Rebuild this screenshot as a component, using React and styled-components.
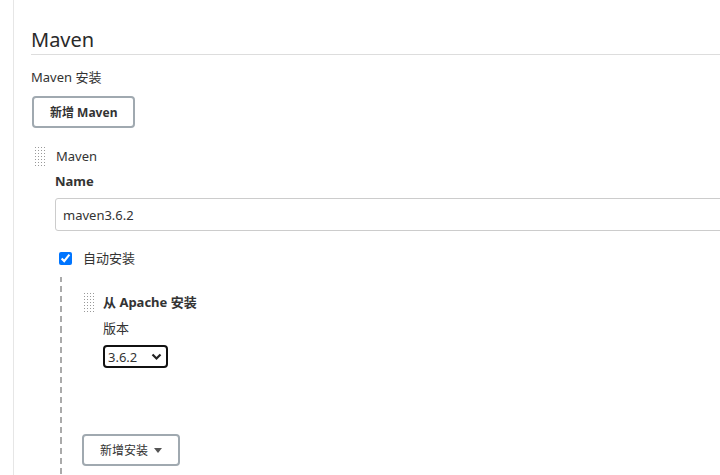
import React from "react";
import styled, { createGlobalStyle } from "styled-components";

const GlobalStyle = createGlobalStyle`
  html, body {
    margin: 0;
    padding: 0;
    background: #fff;
  }
  body {
    font-family: "Noto Sans", "Noto Sans CJK SC", sans-serif;
    font-size: 13px;
    color: #333;
  }
`;

const Page = styled.div`
  width: 720px;
  height: 475px;
  overflow: hidden;
  display: flex;
`;

const Gutter = styled.div`
  width: 13px;
  flex-shrink: 0;
  border-right: 1px solid #e6e6e6;
`;

const Main = styled.div`
  flex: 1;
  padding: 26px 0 0 15px;
  min-width: 0;
`;

const Heading = styled.h2`
  margin: 0 0 0 2px;
  font-size: 20px;
  font-weight: 400;
  line-height: 28px;
  color: #2a2a2a;
  border-bottom: 1px solid #ddd;
`;

const SectionLabel = styled.div`
  margin: 12px 0 0 2px;
  line-height: 20px;
`;

const Button = styled.button`
  display: inline-flex;
  align-items: center;
  gap: 6px;
  height: 32px;
  padding: 0 16px;
  border: 2px solid #a0a9b0;
  border-radius: 4px;
  background: #fff;
  font-family: "Noto Sans", "Noto Sans CJK SC", sans-serif;
  font-size: 12px;
  font-weight: ${({ $bold }) => ($bold ? 700 : 400)};
  color: #333;
`;

const Row = styled.div`
  display: flex;
  align-items: center;
  gap: ${({ $gap }) => $gap || 10}px;
  margin-top: ${({ $top }) => $top || 0}px;
  margin-left: ${({ $left }) => $left || 0}px;
`;

const Handle = styled.div`
  width: 11px;
  height: 19px;
  flex-shrink: 0;
  background-image: radial-gradient(circle at 0.5px 0.5px, #999 0.9px, transparent 1px);
  background-size: 3px 3px;
`;

const Body = styled.div`
  margin-left: ${({ $left }) => $left}px;
`;

const FieldLabel = styled.div`
  font-weight: 700;
  line-height: 20px;
  margin-top: ${({ $top }) => $top || 0}px;
`;

const TextBox = styled.input`
  display: block;
  box-sizing: border-box;
  width: calc(100% + 20px);
  height: 33px;
  margin-top: 7px;
  padding: 0 7px;
  border: 1px solid #ccc;
  border-radius: 3px;
  font-family: "Noto Sans", "Noto Sans CJK SC", sans-serif;
  font-size: 13px;
  color: #333;
  outline: none;
`;

const Check = styled.input`
  width: 13px;
  height: 13px;
  margin: 0;
  accent-color: #0075ff;
`;

const Nested = styled.div`
  margin-left: 5px;
  margin-top: 9px;
  padding-left: 20px;
  padding-top: 15px;
  height: 200px;
  border-left: 2px dashed #aaa;
  border-image: repeating-linear-gradient(to bottom, #aaa 0 6px, transparent 6px 10px) 1;
`;

const Plain = styled.div`
  line-height: 20px;
  margin-top: ${({ $top }) => $top || 0}px;
`;

const SelectBox = styled.div`
  display: inline-flex;
  align-items: center;
  justify-content: space-between;
  box-sizing: border-box;
  width: 65px;
  height: 23px;
  margin-top: 7px;
  padding: 0 4px 0 3px;
  border: 2px solid #111;
  border-radius: 4px;
  font-size: 13px;
  color: #333;
`;

const Spacer = styled.div`
  height: ${({ $h }) => $h}px;
`;

const Caret = () => (
  <svg width="8" height="5" viewBox="0 0 8 5">
    <path d="M0 0h8L4 5z" fill="#555" />
  </svg>
);

const Chevron = () => (
  <svg width="11" height="8" viewBox="0 0 11 8">
    <path d="M1.5 1.5l4 4 4-4" fill="none" stroke="#222" strokeWidth="2.2" />
  </svg>
);

export default function App() {
  return (
    <Page>
      <GlobalStyle />
      <Gutter />
      <Main>
        <Heading>Maven</Heading>
        <SectionLabel>Maven 安装</SectionLabel>
        <Row $top={9} $left={3}>
          <Button $bold>新增 Maven</Button>
        </Row>
        <Row $top={18} $left={6}>
          <Handle />
          <Plain>Maven</Plain>
        </Row>
        <Body $left={26}>
          <FieldLabel $top={5}>Name</FieldLabel>
          <TextBox defaultValue="maven3.6.2" />
          <Row $top={17} $left={4} $gap={11}>
            <Check type="checkbox" defaultChecked />
            <Plain>自动安装</Plain>
          </Row>
          <Nested>
            <Row $gap={8} $left={2}>
              <Handle />
              <FieldLabel>从 Apache 安装</FieldLabel>
            </Row>
            <Body $left={21}>
              <Plain $top={6}>版本</Plain>
              <SelectBox>
                <span>3.6.2</span>
                <Chevron />
              </SelectBox>
            </Body>
            <Spacer $h={66} />
            <Button>
              新增安装 <Caret />
            </Button>
          </Nested>
        </Body>
      </Main>
    </Page>
  );
}
